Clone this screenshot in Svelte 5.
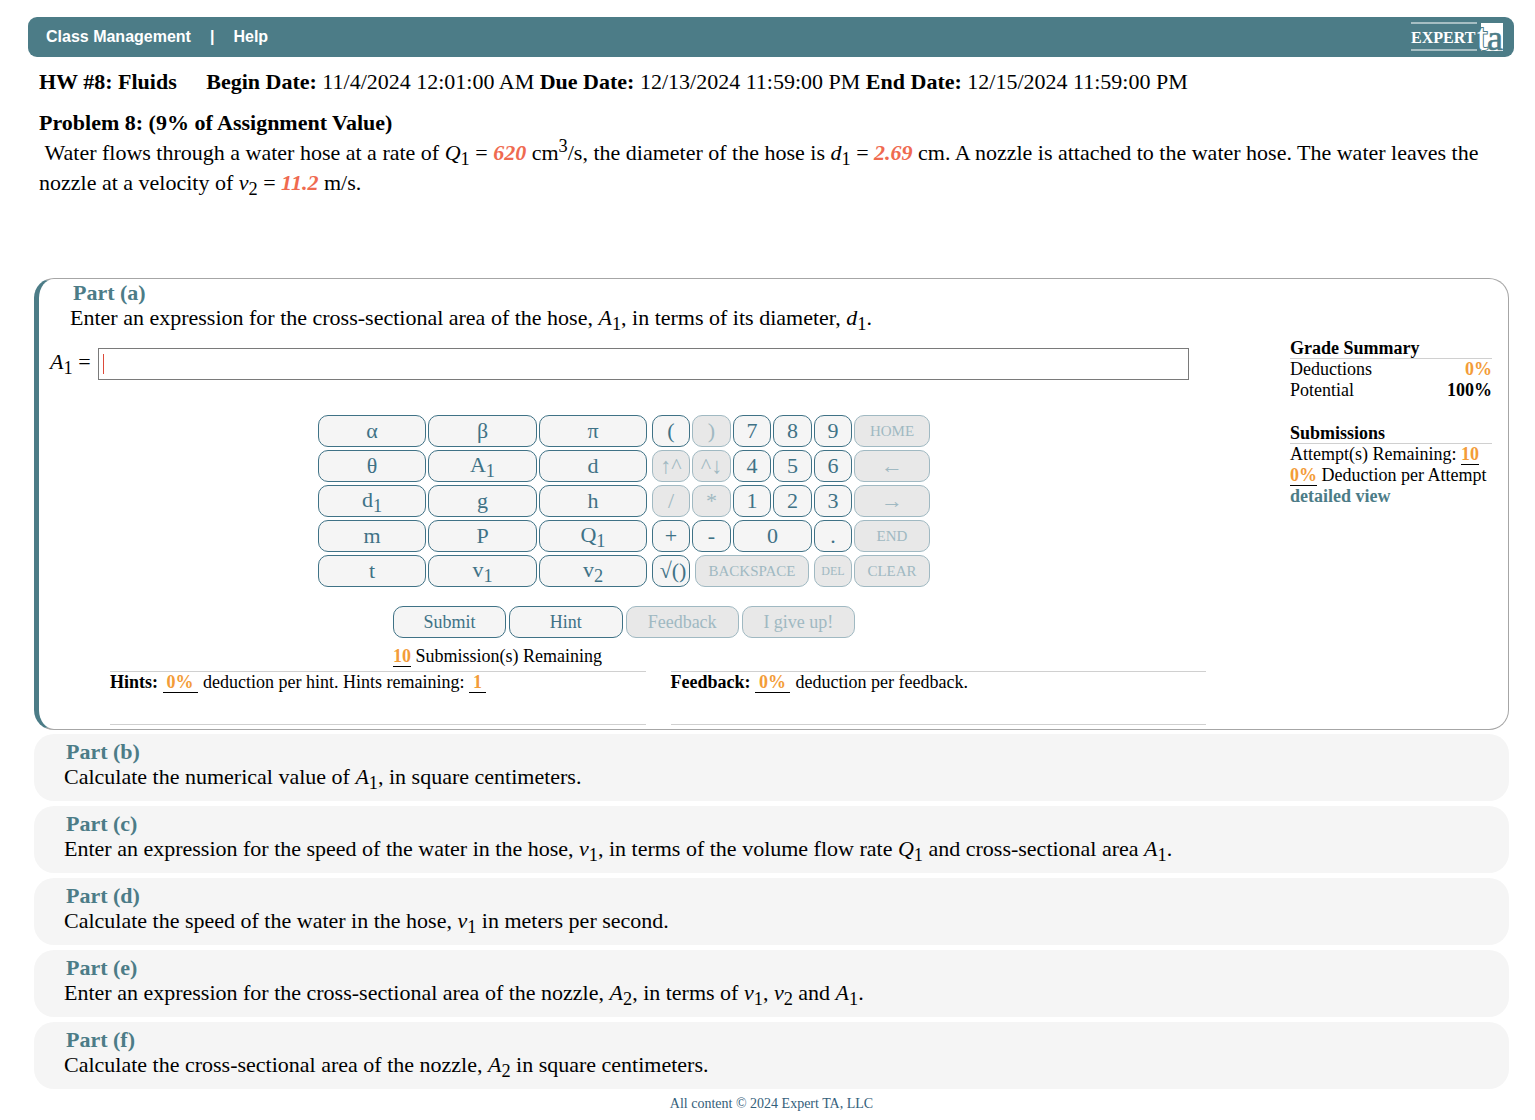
<script>
  let answer = $state('');

  // name + optional subscript
  const LETTERS = [
    ['α'], ['β'], ['π'],
    ['θ'], ['A', '1'], ['d'],
    ['d', '1'], ['g'], ['h'],
    ['m'], ['P'], ['Q', '1'],
    ['t'], ['v', '1'], ['v', '2'],
  ];

  const KEYS = [
    { t: '(' }, { t: ')', off: true }, { t: '7' }, { t: '8' }, { t: '9' }, { t: 'HOME', off: true, cls: 'word' },
    { t: '↑^', off: true }, { t: '^↓', off: true }, { t: '4' }, { t: '5' }, { t: '6' }, { t: '←', off: true },
    { t: '/', off: true }, { t: '*', off: true }, { t: '1' }, { t: '2' }, { t: '3' }, { t: '→', off: true },
    { t: '+' }, { t: '-' }, { t: '0', cls: 'zero' }, { t: '.' }, { t: 'END', off: true, cls: 'word' },
    { t: '√()', cls: 'root' }, { t: 'BACKSPACE', off: true, cls: 'word back' }, { t: 'DEL', off: true, cls: 'tiny' }, { t: 'CLEAR', off: true, cls: 'word' },
  ];

  function type(s) {
    answer += s;
  }
</script>

{#snippet v(name, sub)}<i>{name}</i><sub>{sub}</sub>{/snippet}

<header class="topbar">
  <nav>
    <a href="#classes">Class Management</a>
    <span>|</span>
    <a href="#help">Help</a>
  </nav>
  <svg class="logo" viewBox="0 0 93 40" role="img" aria-label="Expert TA">
    <path d="M0 6H66M0 33H66" stroke="#fff" stroke-width="1.2" />
    <text x="0" y="26" font-size="16" font-weight="bold" fill="#fff">EXPERT</text>
    <path d="M70 6H92V34H70Z" fill="#fff" />
    <text class="t" x="66" y="33" font-size="38" fill="#fff">t</text>
    <text class="a" x="76" y="33" font-size="36" fill="#4c7c87">a</text>
  </svg>
</header>

<main>
  <p class="dates">
    <b class="hw">HW #8: Fluids</b>
    <b>Begin Date:</b> 11/4/2024 12:01:00 AM <b>Due Date:</b> 12/13/2024 11:59:00 PM <b>End Date:</b> 12/15/2024 11:59:00 PM
  </p>

  <section class="problem">
    <h1>Problem 8: (9% of Assignment Value)</h1>
    <p>
      &nbsp;Water flows through a water hose at a rate of {@render v('Q', '1')} = <em>620</em> cm<sup>3</sup>/s, the diameter of the hose is {@render v('d', '1')} = <em>2.69</em> cm. A nozzle is attached to the water hose. The water leaves the nozzle at a velocity of {@render v('v', '2')} = <em>11.2</em> m/s.
    </p>
  </section>

  <section class="active">
    <h2>Part (a)</h2>
    <p class="ask">Enter an expression for the cross-sectional area of the hose, {@render v('A', '1')}, in terms of its diameter, {@render v('d', '1')}.</p>

    <div class="cols">
      <div class="work">
        <div class="answer">
          <label for="answer">{@render v('A', '1')} =</label>
          <div class="field">
            <input id="answer" type="text" bind:value={answer} autocomplete="off" />
            {#if !answer}<span class="cursor"></span>{/if}
          </div>
        </div>

        <div class="entry">
          <div class="pads">
            <div class="letters">
              {#each LETTERS as [name, sub]}
                <button onclick={() => type(name + (sub ?? ''))}>{name}{#if sub}<sub>{sub}</sub>{/if}</button>
              {/each}
            </div>
            <div class="keys">
              {#each KEYS as k}
                <button class={k.cls} disabled={k.off} onclick={() => type(k.t)}>{k.t}</button>
              {/each}
            </div>
          </div>

          <div class="actions">
            <div class="row">
              <button>Submit</button>
              <button>Hint</button>
              <button disabled>Feedback</button>
              <button disabled>I give up!</button>
            </div>
            <p><b class="num">10</b> Submission(s) Remaining</p>
          </div>
        </div>

        <div class="notes">
          <p><b>Hints:</b> <b class="num wide">0%</b> deduction per hint. Hints remaining: <b class="num wide">1</b></p>
          <p><b>Feedback:</b> <b class="num wide">0%</b> deduction per feedback.</p>
        </div>
      </div>

      <aside>
        <h3>Grade Summary</h3>
        <dl>
          <dt>Deductions</dt><dd class="orange">0%</dd>
          <dt>Potential</dt><dd>100%</dd>
        </dl>
        <h3>Submissions</h3>
        <p>Attempt(s) Remaining: <b class="num">10</b></p>
        <p><b class="num">0%</b> Deduction per Attempt</p>
        <a href="#detail">detailed view</a>
      </aside>
    </div>
  </section>

  <section class="part">
    <h2>Part (b)</h2>
    <p>Calculate the numerical value of {@render v('A', '1')}, in square centimeters.</p>
  </section>
  <section class="part">
    <h2>Part (c)</h2>
    <p>Enter an expression for the speed of the water in the hose, {@render v('v', '1')}, in terms of the volume flow rate {@render v('Q', '1')} and cross-sectional area {@render v('A', '1')}.</p>
  </section>
  <section class="part">
    <h2>Part (d)</h2>
    <p>Calculate the speed of the water in the hose, {@render v('v', '1')} in meters per second.</p>
  </section>
  <section class="part">
    <h2>Part (e)</h2>
    <p>Enter an expression for the cross-sectional area of the nozzle, {@render v('A', '2')}, in terms of {@render v('v', '1')}, {@render v('v', '2')} and {@render v('A', '1')}.</p>
  </section>
  <section class="part">
    <h2>Part (f)</h2>
    <p>Calculate the cross-sectional area of the nozzle, {@render v('A', '2')} in square centimeters.</p>
  </section>
</main>

<footer>All content © 2024 Expert TA, LLC</footer>

<style>
  :global(body) { background: #fff; color: #000; font: 22px/25px "Liberation Serif", "Times New Roman", serif; }
  h1, h2, h3, p, dl, dd { margin: 0; font-size: inherit; }
  sub, sup { line-height: 0; }
  button { font: inherit; cursor: pointer; }

  .topbar { display: flex; align-items: center; justify-content: space-between;
    margin: 17px 21px 0 28px; padding: 0 10px 0 18px; height: 40px; box-sizing: border-box;
    background: #4c7c87; border-radius: 9px; }
  nav { display: flex; gap: 19px; color: #fff; font: bold 16px/20px "Liberation Sans", Arial, sans-serif; }
  nav a { color: inherit; text-decoration: none; }
  .logo { width: 93px; height: 40px; overflow: visible; }
  .logo .t { stroke: #4c7c87; stroke-width: 2; paint-order: stroke; }
  .logo .a { stroke: #4c7c87; stroke-width: .6; }

  main { padding: 0 26px 0 34px; }
  .dates { padding: 12px 5px 0; }
  .hw { margin-right: 24px; }

  .problem { padding: 14px 5px 0; line-height: 30px; min-height: 171px; box-sizing: border-box; }
  em { color: #ef6a50; font-weight: bold; }

  h2 { color: #4c7c87; }
  .active { border: 1px solid #a6a6a6; border-left: 5px solid #4c7c87; border-radius: 20px;
    margin-top: 13px; padding: 1px 16px 4px 11px; }
  .active h2 { padding-left: 23px; }
  .ask { padding-left: 20px; }
  .cols { display: flex; align-items: flex-start; justify-content: space-between; margin-top: 18px; }
  .work { flex: 1; margin-right: 84px; }

  .answer { display: flex; gap: 7px; padding-right: 17px; }
  .answer label { line-height: 28px; }
  .field { position: relative; flex: 1; }
  .field input { display: block; width: 100%; height: 32px; box-sizing: border-box; padding: 0 4px;
    border: 1px solid #7a7a7a; border-radius: 0; font: inherit; outline: 0; }
  .cursor { position: absolute; left: 5px; top: 6px; width: 1px; height: 20px; background: #dc4a3a; }

  .entry { padding: 35px 8px 0 0; }
  .pads { display: flex; justify-content: center; gap: 5px; }
  .letters, .keys { display: grid; gap: 3px 2px; grid-auto-rows: 32px; }
  .letters { grid-template-columns: 108px 109px 108px; }
  .keys { grid-template-columns: 38px 39px 38px 39px 38px 76px; }
  .pads button, .row button { border: 1px solid #3f7286; border-radius: 10px; background: #f5f5f5;
    color: #3f7286; padding: 0; line-height: 28px; }
  .pads button:disabled, .row button:disabled { background: #e8e8e8; color: #a0b9c2; border-color: #a0b9c2; cursor: default; }
  /* subscripts grow the line here, which lifts the letter a little */
  .pads sub { line-height: 26px; }
  .pads .word { font-size: 15px; }
  .pads .tiny { font-size: 12px; }
  .pads .root { padding-left: 4px; }
  .zero { grid-column: span 2; }
  .back { grid-column: span 3; margin: 0 3px; }

  .actions { width: 462px; margin: 19px auto 0; font-size: 18px; line-height: 21px; }
  .row { display: grid; grid-template-columns: repeat(4, 1fr); gap: 3px; }
  .row button { height: 32px; }
  .actions p { margin-top: 8px; }

  .num { color: #f39c38; border-bottom: 1px solid #000; }
  .wide { padding: 0 4px; margin-right: 1px; }
  .notes { display: grid; grid-template-columns: 1fr 1fr; gap: 25px; padding-left: 60px; margin-top: 4px;
    font-size: 18px; line-height: 21px; }
  .notes p { height: 52px; border: solid #d0d0d0; border-width: 1px 0; }

  aside { width: 202px; margin-top: -10px; font-size: 18px; line-height: 21px; }
  h3 { line-height: 20px; border-bottom: 1px solid #d0d0d0; }
  dl { display: grid; grid-template-columns: 1fr auto; margin-bottom: 22px; }
  dd { font-weight: bold; text-align: right; }
  .orange { color: #f39c38; }
  aside a { color: #4c7c87; font-weight: bold; text-decoration: none; }

  .part { margin-top: 5px; padding: 5px 30px 12px; background: #f5f5f5; border-radius: 20px; }
  .active + .part { margin-top: 4px; }
  .part h2 { padding-left: 2px; }

  footer { padding: 6px 26px 6px 34px; text-align: center; font-size: 14px; line-height: 17px; color: #34607a; }
</style>
